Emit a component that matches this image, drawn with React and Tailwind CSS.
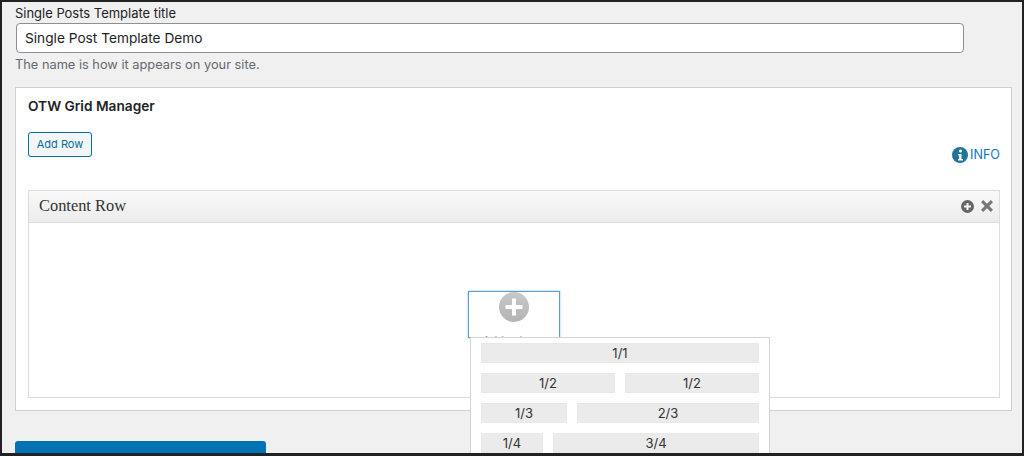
const sizes = [
    [{ label: '1/1', w: 'w-[278px]' }],
    [{ label: '1/2', w: 'w-[134px]' }, { label: '1/2', w: 'w-[134px]' }],
    [{ label: '1/3', w: 'w-[86px]' }, { label: '2/3', w: 'w-[182px]' }],
    [{ label: '1/4', w: 'w-[62px]' }, { label: '3/4', w: 'w-[206px]' }],
];

function ColumnPicker() {
    return (
        <div className="absolute left-[1px] top-[45px] w-[300px] border border-[#d4d4d4] bg-white pl-[10px] pr-[10px] pt-[5px] pb-[10px]">
            <div className="flex flex-col gap-[10px]">
                {sizes.map((row, i) => (
                    <div key={i} className="flex gap-[10px]">
                        {row.map((s, j) => (
                            <div key={j} className={`${s.w} flex h-[20px] items-center justify-center border border-[#e8e8e8] bg-[#ebebeb] pt-[1px] text-[13px] text-[#333]`}>
                                {s.label}
                            </div>
                        ))}
                    </div>
                ))}
            </div>
        </div>
    );
}

function PlusCircle() {
    return (
        <svg width="30" height="30" viewBox="0 0 30 30">
            <defs>
                <linearGradient id="plusFill" x1="0" y1="0" x2="0" y2="1">
                    <stop offset="0" stopColor="#c8c8c8" />
                    <stop offset="1" stopColor="#b4b4b4" />
                </linearGradient>
            </defs>
            <circle cx="15" cy="15" r="15" fill="url(#plusFill)" />
            <path d="M13 6.500h4v6.500h6.500v4H17v6.500h-4V17H6.500v-4H13z" fill="#fff" />
        </svg>
    );
}

export default function App() {
    return (
        <div className="relative h-[456px] w-[1024px] overflow-hidden border-2 border-b-[3px] border-[#222] bg-[#f0f0f0] pl-[13px] pt-[3px] font-['Inter',sans-serif] text-[#1d2327]">
            <div className="text-[13px] leading-[16px] tracking-[-0.02px]">Single Posts Template title</div>
            <div className="ml-[1px] mt-[2px] flex h-[30px] w-[948px] items-center rounded-[4px] border border-[#8c8f94] bg-white pl-[8px] text-[13.7px]">
                Single Post Template Demo
            </div>
            <p className="mt-[2px] text-[12.800px] leading-[20px] text-[#646970]">The name is how it appears on your site.</p>

            <div className="mt-[12px] h-[324px] w-[997px] border border-[#ccd0d4] bg-white pl-[12px] pr-[11px]">
                <h3 className="mt-[9px] text-[13.7px] leading-[18px] font-semibold">OTW Grid Manager</h3>
                <div className="mt-[17px] flex items-start justify-between">
                    <button className="h-[25px] w-[64px] rounded-[3px] border border-[#0071a1] bg-[#f3f5f6] text-[11px] text-[#0071a1]">
                        Add Row
                    </button>
                    <div className="mt-[14px] flex items-center gap-[2px] text-[12.600px] text-[#0a78c2]">
                        <svg width="16" height="16" viewBox="0 0 16 16">
                            <circle cx="8" cy="8" r="8" fill="#21759b" />
                            <circle cx="8.500" cy="4" r="1.500" fill="#fff" />
                            <path d="M6 7h3.500v5H11v1.500H6V12h1.200V8.500H6z" fill="#fff" />
                        </svg>
                        INFO
                    </div>
                </div>

                <div className="mt-[25px] h-[208px] border border-[#dcdcde]">
                    <div className="flex h-[32px] items-center justify-between border-b border-[#dcdcde] bg-gradient-to-b from-[#f9f9f9] to-[#ececec] pl-[10px] pr-[6px]">
                        <span className="font-['Liberation_Serif',serif] text-[16.400px] text-[#333]">Content Row</span>
                        <div className="flex items-center gap-[7px]">
                            <svg width="13" height="13" viewBox="0 0 13 13">
                                <circle cx="6.500" cy="6.500" r="6.500" fill="#666" />
                                <path d="M5.500 3h2v2.500H10v2H7.500V10h-2V7.500H3v-2h2.500z" fill="#fff" />
                            </svg>
                            <svg width="12" height="12" viewBox="0 0 12 12">
                                <path d="M0 2.200L2.200 0 6 3.800 9.800 0 12 2.200 8.200 6 12 9.800 9.800 12 6 8.200 2.200 12 0 9.800 3.800 6z" fill="#777" />
                            </svg>
                        </div>
                    </div>
                    <div className="flex justify-center pt-[68px]">
                        <div className="relative h-[47px] w-[92px] border border-[#5b9dd9] bg-white shadow-[0_0_2px_rgba(30,140,190,0.5)]">
                            <div className="flex justify-center">
                                <PlusCircle />
                            </div>
                            <div className="mt-[12px] text-center text-[11px] leading-[12px] text-[#999]">Add column</div>
                            <ColumnPicker />
                        </div>
                    </div>
                </div>
            </div>

            <div className="mt-[30px] h-[30px] w-[251px] rounded-[3px] bg-[#0073b7]" />
        </div>
    );
}
